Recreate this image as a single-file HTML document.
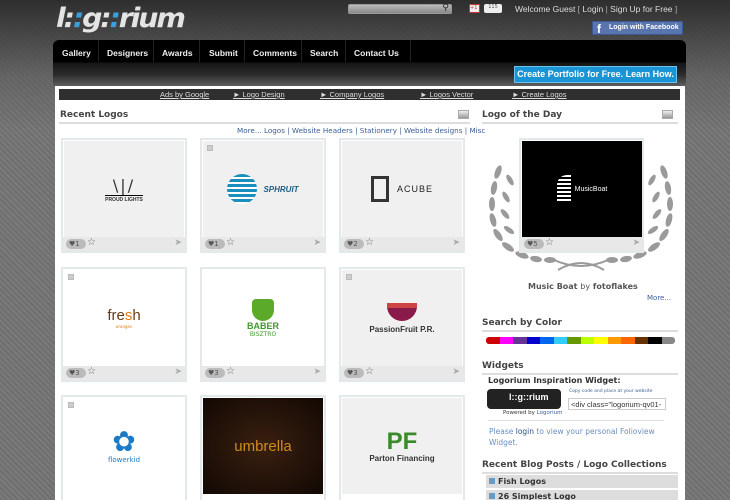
<!DOCTYPE html>
<html><head><meta charset="utf-8"><style>
*{margin:0;padding:0;box-sizing:border-box}
html{width:730px;height:500px;overflow:hidden}
body{width:730px;height:500px;overflow:hidden;font-family:"DejaVu Sans","Liberation Sans",sans-serif;font-size:8px;color:#333;position:relative;
background:repeating-linear-gradient(45deg,#6f6f6f 0 2px,#7a7a7a 2px 4px);}
.top{position:absolute;left:0;top:0;width:730px;height:130px;background:linear-gradient(#2e2e2e,rgba(90,90,90,0.6) 60%,rgba(0,0,0,0));}
.abs{position:absolute}
.logo{left:56px;top:3px;font:italic bold 27px "DejaVu Sans",sans-serif;color:#e4e4e4;letter-spacing:-2px;text-shadow:1px 1px 0 #444;transform:scaleX(1.05);transform-origin:left}
.logo b{color:#3aa0dd}
.search{left:348px;top:4px;width:104px;height:10px;background:linear-gradient(#bbb,#888);border-radius:2px;border:1px solid #999}
.welcome{left:515px;top:4px;color:#ddd;font-size:8.5px;font-family:"Liberation Sans",sans-serif}
.welcome span{color:#aaa}
.fb{left:592px;top:21px;width:91px;height:14px;background:#5a74ae;border:1px solid #3c5690;color:#fff;font:bold 7px "Liberation Sans",sans-serif;padding:2px 0 0 16px}
.fb i{position:absolute;left:4px;top:0;font:bold 12px "Liberation Sans";font-style:normal}
.nav{left:53px;top:40px;width:633px;height:48px;border-radius:6px 6px 4px 4px;background:linear-gradient(#000 0,#000 22px,#151515 23px,#2a2a2a 34px,#666 48px)}
.nav a{position:absolute;top:8px;color:#eee;font:bold 8.5px "Liberation Sans",sans-serif;text-decoration:none}
.nav .sep{position:absolute;top:0;width:1px;height:22px;background:#222}
.cta{left:514px;top:66px;width:163px;height:17px;background:#1a94d4;border:1px solid #6cc2ee;color:#fff;font:bold 9px "Liberation Sans",sans-serif;text-align:center;line-height:15px}
.page{left:55px;top:86px;width:630px;height:414px;background:#fff}
.ads{left:59px;top:89px;width:621px;height:11px;background:#2f2f2f;color:#ddd;font:7.5px "Liberation Sans",sans-serif}
.ads span{position:absolute;top:1px;text-decoration:underline}
h3{position:absolute;font:bold 9px "DejaVu Sans",sans-serif;color:#444}
.hr{position:absolute;height:2px;background:#ddd}
.ico{position:absolute;width:11px;height:9px;background:linear-gradient(#eee,#999);border:1px solid #aaa}
.links{left:237px;top:126px;color:#3a5f95;font-size:7.2px}
.card{position:absolute;width:126px;height:115px;border:2px solid #e3e8e8;background:#fff}
.card .im{position:absolute;left:1px;top:1px;width:120px;height:96px;background:#f0f0f0;display:flex;align-items:center;justify-content:center;flex-direction:column;text-align:center}
.card .ft{position:absolute;left:0;bottom:0;width:122px;height:14px;background:#e8e8e8}
.ft .h{position:absolute;left:3px;top:2px;width:20px;height:10px;border-radius:5px;background:#bbb;color:#555;font-size:7px;line-height:10px;padding-left:3px}
.ft .s{position:absolute;left:24px;top:0;font-size:10px;color:#666}
.ft .m{position:absolute;right:3px;top:1px;font-size:9px;color:#aaa}
.sq{position:absolute;left:5px;top:5px;width:6px;height:6px;background:#ccc;border:1px solid #bbb}
.bar{left:486px;top:337px;width:189px;height:7px;border-radius:3px;overflow:hidden;display:flex}
.bar i{flex:1}
.blog{position:absolute;left:486px;width:192px;height:14px;background:#ddd;border-bottom:1px solid #fff;font:bold 8px "DejaVu Sans";color:#333;padding:2px 0 0 3px}
.blog b{display:inline-block;width:6px;height:6px;background:#6a9bc4;margin-right:3px}
</style></head><body>
<div class="top"></div>
<div class="abs logo">l:<b>:</b>g:<b>:</b>rium</div>
<div class="abs search"><span style="position:absolute;right:2px;top:-2px;font-size:9px;color:#222">&#9906;</span></div>
<div class="abs" style="left:469px;top:4px;width:11px;height:9px;background:#eee;border:1px solid #c33;font-size:5px;color:#c33">+1</div>
<div class="abs" style="left:484px;top:4px;width:18px;height:9px;background:#eee;border-radius:2px;font-size:5px;color:#555;text-align:center">115</div>
<div class="abs welcome">Welcome Guest <span>[</span> Login <span>|</span> Sign Up for Free <span>]</span></div>
<div class="abs fb"><i>f</i>Login with Facebook</div>
<div class="abs nav">
<a style="left:9px">Gallery</a><div class="sep" style="left:45px"></div>
<a style="left:54px">Designers</a><div class="sep" style="left:100px"></div>
<a style="left:109px">Awards</a><div class="sep" style="left:146px"></div>
<a style="left:156px">Submit</a><div class="sep" style="left:191px"></div>
<a style="left:200px">Comments</a><div class="sep" style="left:248px"></div>
<a style="left:257px">Search</a><div class="sep" style="left:292px"></div>
<a style="left:301px">Contact Us</a><div class="sep" style="left:357px"></div>
</div>
<div class="abs cta">Create Portfolio for Free. Learn How.</div>
<div class="abs page"></div>
<div class="abs ads"><span style="left:101px">Ads by Google</span><span style="left:174px">&#9658; Logo Design</span><span style="left:261px">&#9658; Company Logos</span><span style="left:361px">&#9658; Logos Vector</span><span style="left:453px">&#9658; Create Logos</span></div>

<h3 style="left:60px;top:110px">Recent Logos</h3>
<div class="ico" style="left:458px;top:110px"></div>
<div class="hr" style="left:59px;top:122px;width:411px"></div>
<div class="abs links">More... Logos | Website Headers | Stationery | Website designs | Misc</div>

<div class="card" style="left:61px;top:138px"><div class="im"><div style="font-size:16px;letter-spacing:2px">\|/</div><div style="font:bold 5px sans-serif;border-top:1px solid #000;padding-top:1px">PROUD LIGHTS</div></div><div class="ft"><div class="h">&#9829;1</div><div class="s">&#9734;</div><div class="m">&#10148;</div></div></div>
<div class="card" style="left:200px;top:138px"><div class="im" style="flex-direction:row"><div style="width:30px;height:30px;border-radius:50%;background:repeating-linear-gradient(#1a8fbd 0 3px,#fff 3px 5px);margin-right:6px"></div><div style="font:bold italic 8px sans-serif;color:#1a5f8a">SPHRUIT</div></div><div class="sq"></div><div class="ft"><div class="h">&#9829;1</div><div class="s">&#9734;</div><div class="m">&#10148;</div></div></div>
<div class="card" style="left:339px;top:138px"><div class="im" style="flex-direction:row"><div style="width:18px;height:26px;border:3px solid #333;margin-right:8px"></div><div style="font:9px 'Liberation Sans';letter-spacing:1px;color:#222">ACUBE</div></div><div class="ft"><div class="h">&#9829;2</div><div class="s">&#9734;</div><div class="m">&#10148;</div></div></div>

<div class="card" style="left:61px;top:267px"><div class="im" style="background:#fff"><div style="font:15px 'Liberation Sans';color:#6a3a14">fre<span style="color:#e07a10">s</span>h</div><div style="font-size:4px;color:#e07a10">oranges</div></div><div class="sq"></div><div class="ft"><div class="h">&#9829;3</div><div class="s">&#9734;</div><div class="m">&#10148;</div></div></div>
<div class="card" style="left:200px;top:267px"><div class="im" style="background:#fff"><div style="width:22px;height:22px;background:#5caa2a;border-radius:4px 4px 11px 11px"></div><div style="font:bold 9px 'Liberation Sans';color:#3e9a2a">BABER</div><div style="font-size:6px;color:#3e9a2a">BISZTRO</div></div><div class="ft"><div class="h">&#9829;3</div><div class="s">&#9734;</div><div class="m">&#10148;</div></div></div>
<div class="card" style="left:339px;top:267px"><div class="im"><div style="width:30px;height:18px;border-radius:0 0 15px 15px;background:#8a1a4a;border-top:5px solid #c44;margin-bottom:4px"></div><div style="font:bold 8px 'Liberation Sans';color:#333">PassionFruit P.R.</div></div><div class="sq"></div><div class="ft"><div class="h">&#9829;3</div><div class="s">&#9734;</div><div class="m">&#10148;</div></div></div>

<div class="card" style="left:61px;top:395px"><div class="im" style="background:#fff"><div style="font-size:28px;color:#1a7bc4;line-height:28px">&#10047;</div><div style="font-size:7px;color:#1a7bc4">flowerkid</div></div><div class="sq"></div></div>
<div class="card" style="left:200px;top:395px"><div class="im" style="background:radial-gradient(#3a2010,#120804);"><div style="font:15px 'Liberation Sans';color:#d08a20">umbrella</div></div></div>
<div class="card" style="left:339px;top:395px"><div class="im"><div style="font:bold 24px 'Liberation Sans';color:#3a8a2a;line-height:24px">PF</div><div style="font:bold 8px 'Liberation Sans';color:#333">Parton Financing</div></div></div>

<h3 style="left:482px;top:110px">Logo of the Day</h3>
<div class="ico" style="left:662px;top:110px"></div>
<div class="hr" style="left:482px;top:122px;width:196px"></div>
<svg style="position:absolute;left:484px;top:160px" width="194" height="120" viewBox="0 0 194 120">
<g fill="#9a9a9a">
<ellipse cx="14" cy="12" rx="3" ry="7" transform="rotate(20 14 12)"/>
<ellipse cx="10" cy="28" rx="3" ry="7" transform="rotate(10 10 28)"/>
<ellipse cx="8" cy="44" rx="3" ry="7"/>
<ellipse cx="9" cy="60" rx="3" ry="7" transform="rotate(-15 9 60)"/>
<ellipse cx="14" cy="75" rx="3" ry="7" transform="rotate(-35 14 75)"/>
<ellipse cx="24" cy="87" rx="3" ry="7" transform="rotate(-55 24 87)"/>
<ellipse cx="38" cy="95" rx="3" ry="7" transform="rotate(-70 38 95)"/>
<ellipse cx="52" cy="99" rx="3" ry="6" transform="rotate(-80 52 99)"/>
<ellipse cx="66" cy="100" rx="3" ry="6" transform="rotate(-90 66 100)"/>
<ellipse cx="26" cy="20" rx="2.5" ry="6" transform="rotate(-30 26 20)"/>
<ellipse cx="22" cy="37" rx="2.5" ry="6" transform="rotate(-30 22 37)"/>
<ellipse cx="21" cy="54" rx="2.5" ry="6" transform="rotate(-40 21 54)"/>
<ellipse cx="25" cy="70" rx="2.5" ry="6" transform="rotate(-55 25 70)"/>
<ellipse cx="180" cy="12" rx="3" ry="7" transform="rotate(-20 180 12)"/>
<ellipse cx="184" cy="28" rx="3" ry="7" transform="rotate(-10 184 28)"/>
<ellipse cx="186" cy="44" rx="3" ry="7"/>
<ellipse cx="185" cy="60" rx="3" ry="7" transform="rotate(15 185 60)"/>
<ellipse cx="180" cy="75" rx="3" ry="7" transform="rotate(35 180 75)"/>
<ellipse cx="170" cy="87" rx="3" ry="7" transform="rotate(55 170 87)"/>
<ellipse cx="156" cy="95" rx="3" ry="7" transform="rotate(70 156 95)"/>
<ellipse cx="142" cy="99" rx="3" ry="6" transform="rotate(80 142 99)"/>
<ellipse cx="128" cy="100" rx="3" ry="6" transform="rotate(90 128 100)"/>
<ellipse cx="168" cy="20" rx="2.5" ry="6" transform="rotate(30 168 20)"/>
<ellipse cx="172" cy="37" rx="2.5" ry="6" transform="rotate(30 172 37)"/>
<ellipse cx="173" cy="54" rx="2.5" ry="6" transform="rotate(40 173 54)"/>
<ellipse cx="169" cy="70" rx="2.5" ry="6" transform="rotate(55 169 70)"/>
</g>
<path d="M70 100 Q97 112 124 100 M74 110 Q97 96 120 110" stroke="#9a9a9a" stroke-width="2" fill="none"/>
</svg>
<div class="card" style="left:519px;top:138px;width:125px"><div class="im" style="background:#000;flex-direction:row;color:#fff;font:7px 'Liberation Sans'"><div style="width:14px;height:28px;background:repeating-linear-gradient(#fff 0 2px,#000 2px 4px);margin-right:4px;border-radius:10px 0 0 0"></div>MusicBoat</div><div class="ft"><div class="h">&#9829;5</div><div class="s">&#9734;</div><div class="m">&#10148;</div></div></div>
<div style="position:absolute;left:528px;top:282px;font:bold 8px 'DejaVu Sans';color:#555">Music Boat <span style="font-weight:normal">by</span> fotoflakes</div>
<div style="position:absolute;left:647px;top:294px;font-size:7px;color:#3a5f95">More...</div>
<h3 style="left:482px;top:318px">Search by Color</h3>
<div class="hr" style="left:482px;top:330px;width:196px"></div>
<div class="abs bar"><i style="background:#c00"></i><i style="background:#f0f"></i><i style="background:#639"></i><i style="background:#00c"></i><i style="background:#06e"></i><i style="background:#3cf"></i><i style="background:#690"></i><i style="background:#bf0"></i><i style="background:#ff0"></i><i style="background:#f90"></i><i style="background:#f60"></i><i style="background:#630"></i><i style="background:#000"></i><i style="background:#888"></i></div>
<h3 style="left:482px;top:361px">Widgets</h3>
<div class="hr" style="left:482px;top:373px;width:196px"></div>
<div style="position:absolute;left:488px;top:376px;font:bold 8px 'DejaVu Sans';color:#333">Logorium Inspiration Widget:</div>
<div style="position:absolute;left:487px;top:389px;width:74px;height:20px;background:#222;border-radius:4px;color:#fff;font:bold 9px 'Liberation Sans';padding:3px 0 0 22px">l::g::rium</div>
<div style="position:absolute;left:503px;top:410px;font-size:5.5px;color:#333">Powered by <span style="color:#3a5f95">Logorium</span></div>
<div style="position:absolute;left:569px;top:389px;font-size:4.5px;color:#3a5f95">Copy code and place at your website</div>
<div style="position:absolute;left:568px;top:398px;width:98px;height:12px;border:1px solid #ccc;font:7.5px 'Liberation Sans';padding:1px 2px;overflow:hidden;white-space:nowrap">&lt;div class="logorium-qv01-</div>
<div class="hr" style="left:488px;top:420px;width:176px;height:1px"></div>
<div style="position:absolute;left:489px;top:426px;width:180px;font-size:7.5px;line-height:11px;color:#6a8fbf">Please <span style="color:#2a4f85">login</span> to view your personal Folioview Widget.</div>
<h3 style="left:482px;top:460px">Recent Blog Posts / Logo Collections</h3>
<div class="hr" style="left:482px;top:472px;width:196px"></div>
<div class="blog" style="top:475px"><b></b>Fish Logos</div>
<div class="blog" style="top:490px"><b></b>26 Simplest Logo</div>
</body></html>
